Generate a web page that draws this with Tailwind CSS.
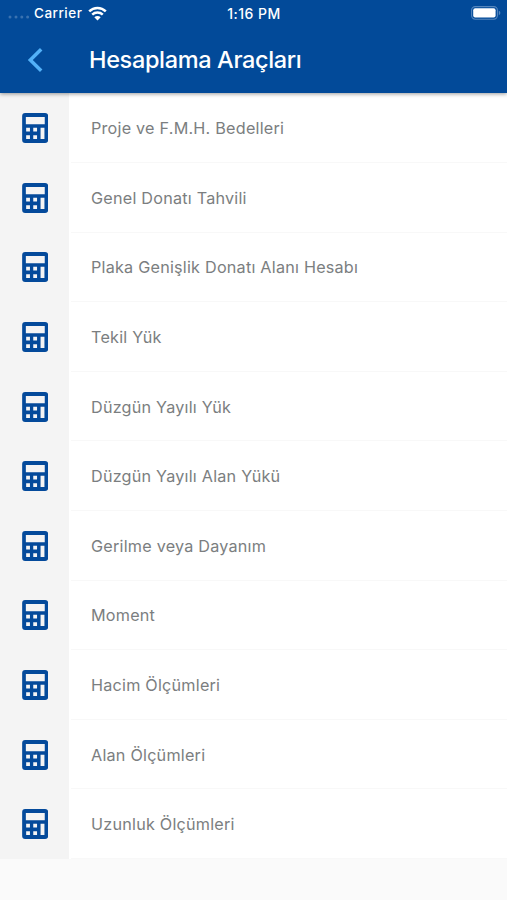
<!DOCTYPE html>
<html lang="tr">
<head>
<meta charset="utf-8">
<meta name="viewport" content="width=device-width, initial-scale=1">
<title>Hesaplama Araçları</title>
<script src="https://cdn.jsdelivr.net/npm/@tailwindcss/browser@4"></script>
</head>
<body class="flex h-[900px] w-[507px] flex-col overflow-hidden bg-[#fafafa] font-['Inter','Liberation_Sans',sans-serif]">
<svg class="hidden">
  <symbol id="calc" viewBox="0 0 26 30">
    <path fill="#044a9b" fill-rule="evenodd" d="M3 0H23A3 3 0 0 1 26 3V27A3 3 0 0 1 23 30H3A3 3 0 0 1 0 27V3A3 3 0 0 1 3 0ZM3.7 4V11.3H22.6V4ZM4 14.7V18.5H7.8V14.7ZM11.1 14.7V18.5H14.9V14.7ZM4 22.2V26H7.8V22.2ZM11.1 22.2V26H14.9V22.2ZM18.4 14.7V26H22.3V14.7Z"/>
  </symbol>
</svg>
<header class="relative z-10 flex h-[93.4px] shrink-0 flex-col bg-[#024a99] text-white shadow-[0_1px_4px_rgba(0,0,0,0.4)]">
  <div class="grid h-[26px] grid-cols-3 items-center text-[13.5px] font-medium">
    <div class="flex items-center pl-2">
      <svg class="mt-2 h-[4px] w-[22px]" viewBox="0 0 22 4" fill="#3a72b0"><circle cx="2" cy="2" r="1.5"/><circle cx="8" cy="2" r="1.5"/><circle cx="13.8" cy="2" r="1.5"/><circle cx="19.6" cy="2" r="1.5"/></svg>
      <span class="ml-1 w-[49px] tracking-[0.5px]">Carrier</span>
      <svg class="ml-[5px] h-[15px] w-[19px]" viewBox="0 0 19 15" fill="none" stroke="#fff" stroke-width="2.5"><path d="M1.2 5.4C5.8 .8 13.2 .8 17.8 5.4"/><path d="M4.2 8.6C7.2 5.8 11.8 5.8 14.8 8.6"/><path fill="#fff" stroke="none" d="M9.5 14.4L6.3 11.2C8.1 9.5 10.9 9.5 12.7 11.2Z"/></svg>
    </div>
    <div class="pl-px text-center text-[14px] tracking-[0.5px]">1:16 PM</div>
    <div class="flex justify-end pr-[6px]">
      <svg class="h-[14px] w-[30px]" viewBox="0 0 30 14"><rect x=".6" y=".6" width="25.8" height="12.6" rx="3.6" fill="none" stroke="#5586bd" stroke-width="1.1"/><rect x="2.2" y="2.2" width="22.4" height="9.4" rx="2" fill="#fff"/><path fill="#5586bd" d="M27.8 4.8Q29.4 5.4 29.4 7T27.8 9.2Z"/></svg>
    </div>
  </div>
  <div class="flex h-[67px] items-center">
    <svg class="ml-[27px] h-[26px] w-[17px]" viewBox="0 0 17 26" fill="none" stroke="#53b1f8" stroke-width="3.5"><path d="M14.2 2.3L3.3 13L14.2 23.7"/></svg>
    <h1 class="ml-[45px] text-[23.5px] leading-[30px] font-medium tracking-[-0.35px] whitespace-nowrap">Hesaplama Araçları</h1>
  </div>
</header>
<main id="list" class="flex shrink-0 flex-col bg-white"></main>
<template id="row">
  <div class="flex h-[69.6px] shrink-0">
    <div class="flex w-[69px] items-center bg-[#f4f4f4] pl-[22px]"><svg class="h-[30px] w-[26.3px]"><use href="#calc"/></svg></div>
    <div class="ml-[2px] flex flex-1 items-center border-b border-[#f8f8f8] pt-px pl-[20px]"><span class="text-[16.2px] leading-6 tracking-[0.22px] whitespace-nowrap text-[#7b7e80]"></span></div>
  </div>
</template>
<script>
const names = ["Proje ve F.M.H. Bedelleri", "Genel Donatı Tahvili", "Plaka Genişlik Donatı Alanı Hesabı", "Tekil Yük", "Düzgün Yayılı Yük", "Düzgün Yayılı Alan Yükü", "Gerilme veya Dayanım", "Moment", "Hacim Ölçümleri", "Alan Ölçümleri", "Uzunluk Ölçümleri"];
for (const name of names) {
  const row = document.getElementById("row").content.cloneNode(true);
  row.querySelector("span").textContent = name;
  document.getElementById("list").append(row);
}
</script>
</body>
</html>
